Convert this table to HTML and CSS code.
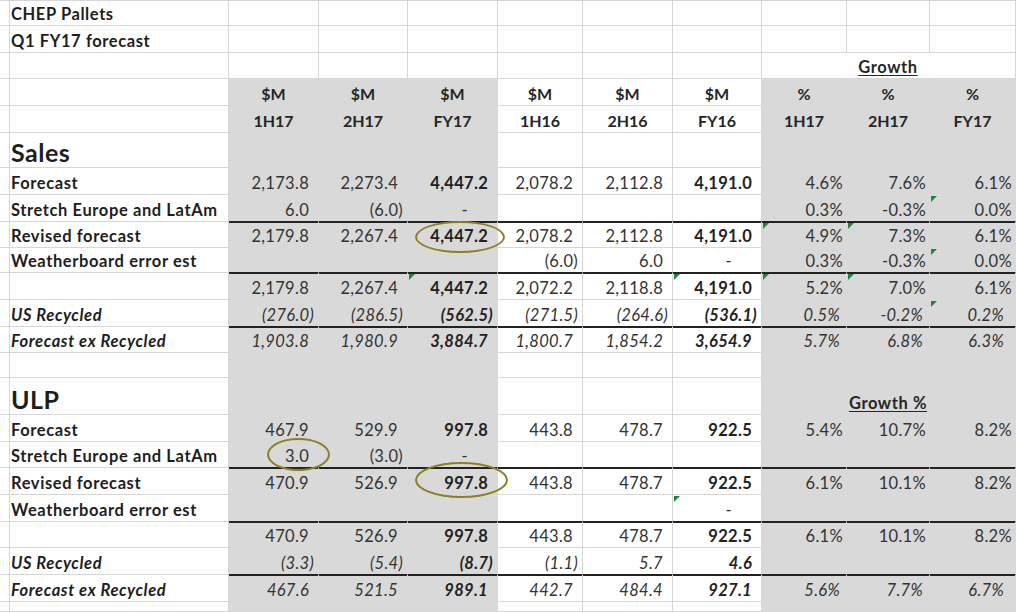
FILE: index.html
```html
<!DOCTYPE html>
<html lang="en">
<head>
<meta charset="utf-8">
<title>CHEP Pallets – Q1 FY17 forecast</title>
<link rel="stylesheet" href="styles.css">
</head>
<body>
<div class="sheet">

<div class="row h26 first">
  <div class="c"></div><div class="c lab">CHEP Pallets</div>
  <div class="c"></div><div class="c"></div><div class="c"></div><div class="c"></div><div class="c"></div><div class="c"></div><div class="c"></div><div class="c"></div><div class="c"></div>
</div>
<div class="row h27">
  <div class="c"></div><div class="c lab">Q1 FY17 forecast</div>
  <div class="c"></div><div class="c"></div><div class="c"></div><div class="c"></div><div class="c"></div><div class="c"></div><div class="c"></div><div class="c"></div><div class="c"></div>
</div>
<div class="row h26">
  <div class="c"></div><div class="c lab"></div>
  <div class="c"></div><div class="c"></div><div class="c"></div><div class="c"></div><div class="c"></div><div class="c"></div><div class="c nr"></div><div class="c nr gr">Growth</div><div class="c"></div>
</div>
<div class="row h27">
  <div class="c"></div><div class="c lab"></div>
  <div class="c g hd">$M</div><div class="c g hd">$M</div><div class="c g hd">$M</div><div class="c hd">$M</div><div class="c hd">$M</div><div class="c hd">$M</div><div class="c g hd">%</div><div class="c g hd">%</div><div class="c g hd">%</div>
</div>
<div class="row h27">
  <div class="c"></div><div class="c lab"></div>
  <div class="c g hd">1H17</div><div class="c g hd">2H17</div><div class="c g hd">FY17</div><div class="c hd">1H16</div><div class="c hd">2H16</div><div class="c hd">FY16</div><div class="c g hd">1H17</div><div class="c g hd">2H17</div><div class="c g hd">FY17</div>
</div>
<div class="row h35">
  <div class="c"></div><div class="c lab big">Sales</div>
  <div class="c g"></div><div class="c g"></div><div class="c g"></div><div class="c"></div><div class="c"></div><div class="c"></div><div class="c g"></div><div class="c g"></div><div class="c g"></div>
</div>
<div class="row h27">
  <div class="c"></div><div class="c lab">Forecast</div>
  <div class="c g">2,173.8</div><div class="c g">2,273.4</div><div class="c g b">4,447.2</div><div class="c">2,078.2</div><div class="c">2,112.8</div><div class="c b">4,191.0</div><div class="c g p">4.6%</div><div class="c g p">7.6%</div><div class="c g p">6.1%</div>
</div>
<div class="row h27 pre">
  <div class="c"></div><div class="c lab">Stretch Europe and LatAm</div>
  <div class="c g">6.0</div><div class="c g neg">(6.0)</div><div class="c g dash">-</div><div class="c"></div><div class="c"></div><div class="c"></div><div class="c g p">0.3%</div><div class="c g p">-0.3%</div><div class="c g p"><i class="tri"></i>0.0%</div>
</div>
<div class="row h26 tk">
  <div class="c"></div><div class="c lab">Revised forecast</div>
  <div class="c g">2,179.8</div><div class="c g">2,267.4</div><div class="c g b"><span class="ov ov1"></span>4,447.2</div><div class="c">2,078.2</div><div class="c">2,112.8</div><div class="c b">4,191.0</div><div class="c g p"><i class="tri"></i>4.9%</div><div class="c g p"><i class="tri"></i>7.3%</div><div class="c g p">6.1%</div>
</div>
<div class="row h25 pre">
  <div class="c"></div><div class="c lab">Weatherboard error est</div>
  <div class="c g"></div><div class="c g"></div><div class="c g"></div><div class="c neg">(6.0)</div><div class="c">6.0</div><div class="c dash">-</div><div class="c g p">0.3%</div><div class="c g p">-0.3%</div><div class="c g p"><i class="tri"></i>0.0%</div>
</div>
<div class="row h27 tk">
  <div class="c"></div><div class="c lab"></div>
  <div class="c g">2,179.8</div><div class="c g">2,267.4</div><div class="c g b"><i class="tri"></i>4,447.2</div><div class="c">2,072.2</div><div class="c">2,118.8</div><div class="c b"><i class="tri"></i>4,191.0</div><div class="c g p"><i class="tri"></i>5.2%</div><div class="c g p"><i class="tri"></i>7.0%</div><div class="c g p">6.1%</div>
</div>
<div class="row h27 pre">
  <div class="c"></div><div class="c lab i">US Recycled</div>
  <div class="c g i neg">(276.0)</div><div class="c g i neg">(286.5)</div><div class="c g i b neg">(562.5)</div><div class="c i neg">(271.5)</div><div class="c i neg">(264.6)</div><div class="c i b neg">(536.1)</div><div class="c g i pi">0.5%</div><div class="c g i pi">-0.2%</div><div class="c g i pj"><i class="tri"></i>0.2%</div>
</div>
<div class="row h26 tk">
  <div class="c"></div><div class="c lab i">Forecast ex Recycled</div>
  <div class="c g i">1,903.8</div><div class="c g i">1,980.9</div><div class="c g i b">3,884.7</div><div class="c i">1,800.7</div><div class="c i">1,854.2</div><div class="c i b">3,654.9</div><div class="c g i pi">5.7%</div><div class="c g i pi">6.8%</div><div class="c g i pj">6.3%</div>
</div>
<div class="row h25">
  <div class="c"></div><div class="c lab"></div>
  <div class="c g"></div><div class="c g"></div><div class="c g"></div><div class="c"></div><div class="c"></div><div class="c"></div><div class="c g"></div><div class="c g"></div><div class="c g"></div>
</div>
<div class="row h37">
  <div class="c"></div><div class="c lab big">ULP</div>
  <div class="c g"></div><div class="c g"></div><div class="c g"></div><div class="c"></div><div class="c"></div><div class="c"></div><div class="c g"></div><div class="c g gr">Growth %</div><div class="c g"></div>
</div>
<div class="row h27">
  <div class="c"></div><div class="c lab">Forecast</div>
  <div class="c g">467.9</div><div class="c g">529.9</div><div class="c g b">997.8</div><div class="c">443.8</div><div class="c">478.7</div><div class="c b">922.5</div><div class="c g p">5.4%</div><div class="c g p">10.7%</div><div class="c g p">8.2%</div>
</div>
<div class="row h26 pre">
  <div class="c"></div><div class="c lab">Stretch Europe and LatAm</div>
  <div class="c g"><span class="ov ov2"></span>3.0</div><div class="c g neg">(3.0)</div><div class="c g dash">-</div><div class="c"></div><div class="c"></div><div class="c"></div><div class="c g"></div><div class="c g"></div><div class="c g"></div>
</div>
<div class="row h27 tk">
  <div class="c"></div><div class="c lab">Revised forecast</div>
  <div class="c g">470.9</div><div class="c g">526.9</div><div class="c g b"><span class="ov ov3"></span>997.8</div><div class="c">443.8</div><div class="c">478.7</div><div class="c b">922.5</div><div class="c g p">6.1%</div><div class="c g p">10.1%</div><div class="c g p">8.2%</div>
</div>
<div class="row h27 pre">
  <div class="c"></div><div class="c lab">Weatherboard error est</div>
  <div class="c g"></div><div class="c g"></div><div class="c g"></div><div class="c"></div><div class="c"></div><div class="c dash"><i class="tri"></i>-</div><div class="c g"></div><div class="c g"></div><div class="c g"></div>
</div>
<div class="row h26 tk">
  <div class="c"></div><div class="c lab"></div>
  <div class="c g">470.9</div><div class="c g">526.9</div><div class="c g b">997.8</div><div class="c">443.8</div><div class="c">478.7</div><div class="c b">922.5</div><div class="c g p">6.1%</div><div class="c g p">10.1%</div><div class="c g p">8.2%</div>
</div>
<div class="row h27 pre">
  <div class="c"></div><div class="c lab i">US Recycled</div>
  <div class="c g i neg">(3.3)</div><div class="c g i neg">(5.4)</div><div class="c g i b neg">(8.7)</div><div class="c i neg">(1.1)</div><div class="c i">5.7</div><div class="c i b">4.6</div><div class="c g"></div><div class="c g"></div><div class="c g"></div>
</div>
<div class="row h27 tk">
  <div class="c"></div><div class="c lab i">Forecast ex Recycled</div>
  <div class="c g i">467.6</div><div class="c g i">521.5</div><div class="c g i b">989.1</div><div class="c i">442.7</div><div class="c i">484.4</div><div class="c i b">927.1</div><div class="c g i pi">5.6%</div><div class="c g i pi">7.7%</div><div class="c g i pj">6.7%</div>
</div>
<div class="row h10">
  <div class="c"></div><div class="c lab"></div>
  <div class="c g"></div><div class="c g"></div><div class="c g"></div><div class="c"></div><div class="c"></div><div class="c"></div><div class="c g"></div><div class="c g"></div><div class="c g"></div>
</div>

</div>
</body>
</html>
```

FILE: styles.css
```css
* { box-sizing: border-box; margin: 0; padding: 0; }
html, body { width: 1016px; height: 612px; overflow: hidden; background: #fff; }
body {
  font-family: Lato, "Open Sans", sans-serif;
  font-size: 16.5px;
  letter-spacing: 0.3px;
  color: #333;
}
.sheet { width: 1016px; }
.row {
  display: grid;
  grid-template-columns: 8px 221px 90px 89px 90px 85px 90px 89px 85px 83px 86px;
}
.h10 { height: 10px; }
.h25 { height: 25px; }
.h26 { height: 26px; }
.h27 { height: 27px; }
.h35 { height: 35px; }
.h37 { height: 37px; }

.c {
  position: relative;
  display: flex;
  align-items: flex-end;
  justify-content: flex-end;
  border-right: 1px solid #d6d6d6;
  border-bottom: 1px solid #d6d6d6;
  padding: 0 9px 2px 0;
  line-height: 18px;
  white-space: nowrap;
}
.first .c { box-shadow: inset 0 1px 0 #d6d6d6; }
.g { background: #d9d9d9; border-color: #d9d9d9; }
.nr { border-right-color: #fff; }

.lab {
  justify-content: flex-start;
  padding: 0 0 2px 3px;
  font-weight: 700;
  letter-spacing: 0.6px;
  color: #1e1e1e;
}
.big { font-size: 25px; line-height: 28px; letter-spacing: 0.5px; padding-bottom: 1px; }
.hd {
  justify-content: center;
  padding-right: 0;
  font-size: 16px;
  letter-spacing: 0;
  font-weight: 700;
  color: #262626;
}
.gr {
  justify-content: center;
  padding-right: 0;
  font-weight: 700;
  letter-spacing: 0.6px;
  color: #262626;
  text-decoration: underline;
  text-underline-offset: 2px;
}
.b { font-weight: 700; color: #222; }
.i { font-style: italic; }
.neg { padding-right: 4px; }
.dash { padding-right: 29px; }
.p { padding-right: 3px; }
.pi { padding-right: 6px; }
.pj { padding-right: 11px; }

.pre .c:nth-child(n+3) { border-bottom-color: #222; }
.tk .c:nth-child(n+3) { box-shadow: inset 0 1px 0 #222; }

.tri {
  position: absolute;
  top: 1px;
  left: 1px;
  width: 0;
  height: 0;
  border-top: 6px solid #22863a;
  border-right: 6px solid transparent;
}

.ov {
  position: absolute;
  z-index: 2;
  border: 2px solid #8e7e24;
  border-radius: 50%;
}
.ov1 { left: 7px; top: -1px; width: 90px; height: 32px; }
.ov2 { left: 38px; top: -4px; width: 63px; height: 33px; }
.ov3 { left: 7px; top: -6px; width: 93px; height: 36px; }
```
